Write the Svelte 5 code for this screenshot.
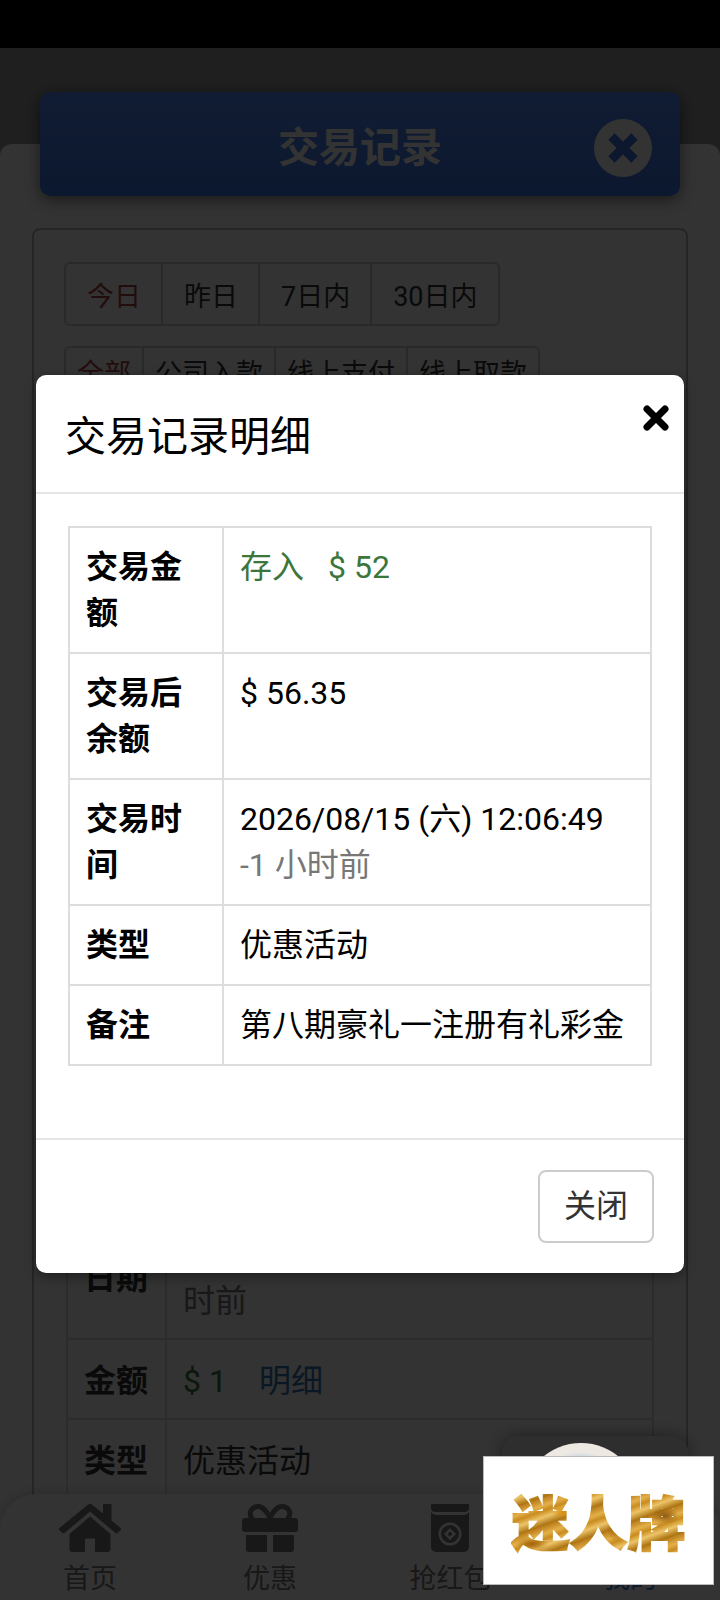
<script>
  let dialogOpen = true;
  let range = '今日';
  let kind = '全部';

  const ranges = ['今日', '昨日', '7日内', '30日内'];
  const kinds = ['全部', '公司入款', '线上支付', '线上取款'];

  const records = [
    { date: '2026/08/15 (六) 12:05:30', ago: '-1 小时前', amount: '$ 1', type: '优惠活动' },
  ];

  const tabs = [
    { name: '首页', icon: 'home' },
    { name: '优惠', icon: 'gift' },
    { name: '抢红包', icon: 'packet' },
    { name: '我的', icon: 'user', active: true },
  ];

  function close() {
    dialogOpen = false;
  }
</script>

<div class="app">
  <div class="status"></div>

  <main>
    <div class="sheet">
      <header>
        <h1>交易记录</h1>
        <button class="round" aria-label="返回">
          <svg viewBox="0 0 58 58">
            <circle cx="29" cy="29" r="29" fill="#fff" />
            <path d="M17.500 17.500L40.500 40.500M40.500 17.500L17.500 40.500" stroke="#3c78e6" stroke-width="9" />
          </svg>
        </button>
      </header>

      <section class="panel">
        <div class="group">
          {#each ranges as item}
            <button class:on={range === item} on:click={() => (range = item)}>{item}</button>
          {/each}
        </div>
        <div class="group tight">
          {#each kinds as item}
            <button class:on={kind === item} on:click={() => (kind = item)}>{item}</button>
          {/each}
        </div>

        <div class="records">
          {#each records as record}
            <table>
              <tbody>
                <tr><th>日期</th><td>{record.date} <span class="muted">{record.ago}</span></td></tr>
                <tr>
                  <th>金额</th>
                  <td><span class="green amount">{record.amount}</span><a href="#detail" on:click={() => (dialogOpen = true)}>明细</a></td>
                </tr>
                <tr><th>类型</th><td>{record.type}</td></tr>
              </tbody>
            </table>
          {/each}
        </div>
      </section>
    </div>
  </main>

  <div class="service"></div>

  <nav>
    {#each tabs as tab}
      <a href="#{tab.icon}" class:active={tab.active}>
        <svg viewBox="0 0 64 48">
          {#if tab.icon === 'home'}
            <path d="M32 12.500L52.500 30V45a3 3 0 0 1-3 3H37V34.500H27V48H14.500a3 3 0 0 1-3-3V30Z" />
            <path d="M29.500 1a4 4 0 0 1 5 0L45 9.500V0h8.500v16.500L62.500 24a1.500 1.500 0 0 1 .2 2L59.500 29a1.500 1.500 0 0 1-2 0L32 7.500L6.500 29a1.500 1.500 0 0 1-2 0L1.200 26a1.500 1.500 0 0 1 .2-2Z" />
          {:else if tab.icon === 'gift'}
            <path d="M15 16C9 9 14 2.500 20 2.500c6 0 9 6 12 11C35 8.500 38 2.500 44 2.500c6 0 11 6.500 5 13.500" fill="none" stroke="currentColor" stroke-width="5" />
            <rect x="4" y="14" width="56" height="14" rx="3" />
            <path d="M8 31H29V48H11a3 3 0 0 1-3-3ZM35 31H56V45a3 3 0 0 1-3 3H35Z" />
          {:else if tab.icon === 'packet'}
            <path d="M13 0H51V4Q51 8 46 8H18Q13 8 13 4Z" />
            <path fill-rule="evenodd" d="M13 8Q15 11 19 11H45Q49 11 51 8V43a5 5 0 0 1-5 5H18a5 5 0 0 1-5-5ZM32 18.500a11.500 11.500 0 1 0 0 23a11.500 11.500 0 1 0 0-23ZM32 21a9 9 0 1 1 0 18a9 9 0 1 1 0-18ZM32 24L26 30L32 36L38 30ZM32 27.500L34.500 30L32 32.500L29.500 30Z" />
          {:else}
            <circle cx="32" cy="12" r="12" />
            <path d="M10 48Q10 27 32 27Q54 27 54 48Z" />
          {/if}
        </svg>
        <span>{tab.name}</span>
      </a>
    {/each}
  </nav>

  {#if dialogOpen}
    <div class="backdrop">
      <div class="dialog" role="dialog" aria-labelledby="dialog-title">
        <div class="dialog-head">
          <h2 id="dialog-title">交易记录明细</h2>
          <button class="x" aria-label="关闭窗口" on:click={close}>
            <svg viewBox="0 0 26 26"><path d="M4 4L22 22M22 4L4 22" stroke="#000" stroke-width="7" stroke-linecap="round" /></svg>
          </button>
        </div>
        <div class="dialog-body">
          <table>
            <tbody>
              <tr><th>交易金额</th><td class="green"><span class="way">存入</span>$ 52</td></tr>
              <tr><th>交易后余额</th><td>$ 56.35</td></tr>
              <tr><th>交易时间</th><td>2026/08/15 (六) 12:06:49<br /><span class="muted">-1 小时前</span></td></tr>
              <tr><th>类型</th><td>优惠活动</td></tr>
              <tr><th>备注</th><td>第八期豪礼一注册有礼彩金</td></tr>
            </tbody>
          </table>
        </div>
        <div class="dialog-foot">
          <button on:click={close}>关闭</button>
        </div>
      </div>
    </div>
  {/if}

  <!-- floating brand card with the service avatar behind it -->
  <div class="floating">
    <div class="avatar"></div>
    <div class="brand"><span>迷人牌</span></div>
  </div>
</div>

<style>
  :global(body) {
    background: #000;
  }

  .app {
    position: relative;
    display: flex;
    flex-direction: column;
    height: 100vh;
    overflow: hidden;
    font-family: Roboto, "Noto Sans CJK SC", sans-serif;
    font-size: 32px;
    line-height: 46px;
    color: #000;
  }

  .app * {
    box-sizing: border-box;
  }

  button {
    margin: 0;
    font: inherit;
    color: inherit;
    background: none;
    cursor: pointer;
  }

  svg {
    display: block;
    fill: currentColor;
  }

  a {
    color: #337ab7;
    text-decoration: none;
  }

  .status {
    flex: none;
    height: 48px;
    background: #000;
  }

  main {
    flex: 1;
    min-height: 0;
    padding-top: 96px;
    color: #333;
    background: #9b9b9b;
  }

  .sheet {
    min-height: 100%;
    padding: 0 32px;
    border-radius: 12px 12px 0 0;
    background: #fdfdfd;
  }

  header {
    position: relative;
    top: -52px;
    display: flex;
    align-items: center;
    justify-content: center;
    height: 104px;
    margin: 0 8px -20px;
    padding-top: 8px;
    border-radius: 10px;
    background: linear-gradient(#558cff, #3c78e6);
    box-shadow: 0 4px 16px rgba(0, 0, 0, 0.5);
  }

  h1 {
    margin: 0;
    font-size: 41px;
    font-weight: 700;
    color: #fff;
  }

  .round {
    position: absolute;
    right: 28px;
    padding: 0;
    border: 0;
  }

  .round svg {
    width: 58px;
    height: 58px;
  }

  .panel {
    padding: 32px 32px 140px 30px;
    border: 2px solid #bbb;
    border-radius: 8px;
  }

  .group {
    display: flex;
    width: fit-content;
    margin-bottom: 20px;
    border: 2px solid #ccc;
    border-radius: 6px;
  }

  .group button {
    height: 60px;
    padding: 5px 20px 0 21px;
    border: 0;
    font-size: 27px;
    line-height: 40px;
  }

  .group.tight button {
    height: 46px;
    padding: 5px 11px 0;
  }

  .group button + button {
    border-left: 2px solid #ccc;
  }

  .group .on {
    color: #a94442;
  }

  .records {
    padding: 796px 0 0 2px;
  }

  table {
    width: 100%;
    border-collapse: collapse;
  }

  th,
  td {
    padding: 16px;
    border: 2px solid #ddd;
    text-align: left;
  }

  .records th,
  .records td {
    padding: 18px 16px 14px;
  }

  .records th {
    width: 99px;
    white-space: nowrap;
  }

  .amount {
    margin-right: 32px;
  }

  .green {
    color: #3c763d;
  }

  .muted {
    color: #777;
  }

  .service {
    position: absolute;
    right: 32px;
    bottom: 64px;
    width: 186px;
    height: 100px;
    border-radius: 16px;
    background: #e4e4e4;
    box-shadow: 0 0 16px rgba(0, 0, 0, 0.4);
  }

  nav {
    position: absolute;
    left: 0;
    right: 0;
    bottom: 0;
    display: flex;
    height: 106px;
    padding-top: 10px;
    border-radius: 36px 36px 0 0;
    background: #fdfdfd;
    box-shadow: 0 0 12px rgba(0, 0, 0, 0.2);
  }

  nav a {
    flex: 1;
    display: flex;
    flex-direction: column;
    align-items: center;
    gap: 7px;
    font-size: 27px;
    line-height: 40px;
    color: #777;
  }

  nav a.active {
    color: #3c78e6;
  }

  nav svg {
    width: 64px;
    height: 48px;
  }

  .backdrop {
    position: absolute;
    top: 48px;
    right: 0;
    bottom: 0;
    left: 0;
    display: flex;
    align-items: center;
    padding: 0 36px;
    background: rgba(0, 0, 0, 0.8);
  }

  .dialog {
    flex: 1;
    border-radius: 10px;
    background: #fff;
    box-shadow: 0 4px 12px rgba(0, 0, 0, 0.4);
  }

  .dialog-head {
    display: flex;
    justify-content: space-between;
    align-items: flex-start;
    padding: 30px 15px 25px 29px;
    border-bottom: 2px solid #e5e5e5;
  }

  h2 {
    margin: 2px 0 0;
    font-size: 41px;
    font-weight: 400;
    line-height: 60px;
  }

  .x {
    padding: 0;
    border: 0;
  }

  .x svg {
    width: 26px;
    height: 26px;
  }

  .dialog-body {
    padding: 32px 32px 72px;
  }

  .dialog-body th {
    width: 154px;
  }

  .dialog-body th,
  .dialog-body td {
    vertical-align: top;
  }

  .way {
    margin-right: 24px;
  }

  .dialog-foot {
    display: flex;
    justify-content: flex-end;
    padding: 30px;
    border-top: 2px solid #e5e5e5;
  }

  .dialog-foot button {
    padding: 11px 24px 12px;
    border: 2px solid #ccc;
    border-radius: 8px;
    color: #333;
  }

  .floating {
    position: absolute;
    right: 6px;
    bottom: 15px;
    width: 231px;
    height: 129px;
  }

  .avatar {
    position: absolute;
    top: -13px;
    left: 39px;
    width: 118px;
    height: 118px;
    border-radius: 50%;
    background: radial-gradient(circle, #d5dbe4 46px, #ede8e2 50px);
  }

  .brand {
    position: relative;
    display: flex;
    align-items: center;
    justify-content: center;
    height: 100%;
    padding-bottom: 2px;
    border: 1px solid #bbb;
    background: #fff;
  }

  .brand span {
    font-family: "Noto Sans CJK SC", sans-serif;
    font-size: 58px;
    font-weight: 900;
    font-style: oblique 8deg;
    line-height: 80px;
    color: transparent;
    -webkit-text-stroke: 2px transparent;
    background:
      radial-gradient(ellipse 12px 6px at 30% 40%, #dd8a08, transparent),
      radial-gradient(ellipse 9px 14px at 60% 60%, #a4660c, transparent),
      radial-gradient(ellipse 14px 8px at 88% 45%, #8f5a10, transparent),
      radial-gradient(ellipse 16px 7px at 12% 80%, #a4660c, transparent),
      repeating-linear-gradient(160deg, #b87a18 0, #e3b04a 8px, #c98c1e 13px, #edc468 19px, #a8700f 27px);
    background-clip: text;
    -webkit-background-clip: text;
  }
</style>
